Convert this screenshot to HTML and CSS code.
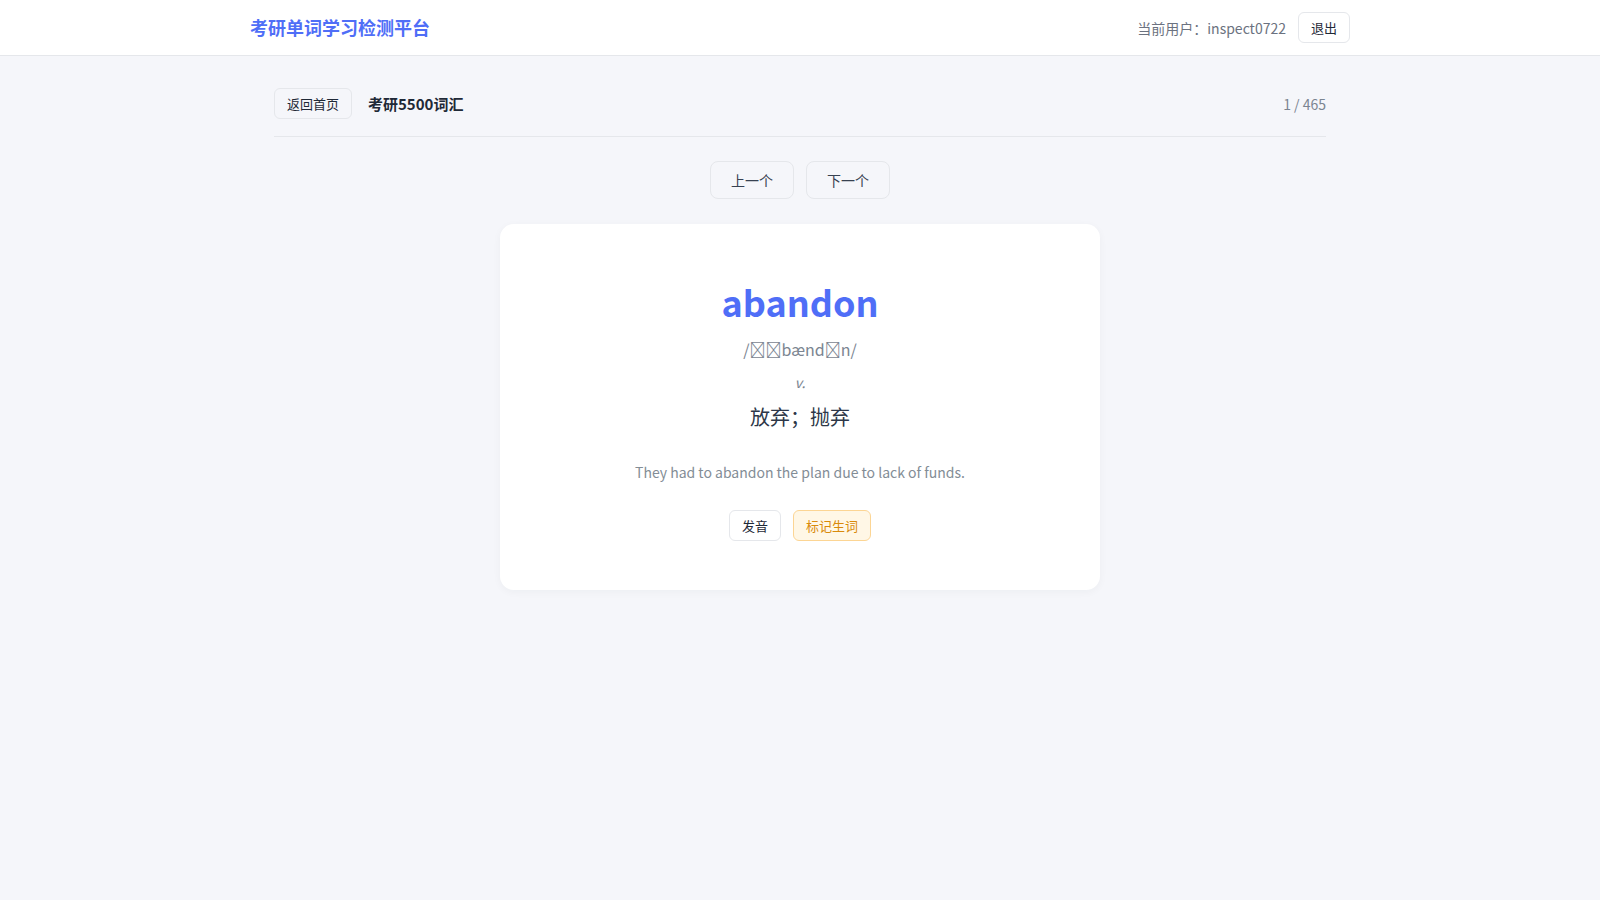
FILE: index.html
```html
<!DOCTYPE html>
<html lang="zh-CN">
<head>
<meta charset="UTF-8">
<title>考研单词学习检测平台</title>
<link rel="stylesheet" href="styles.css">
</head>
<body>
  <header class="site-header">
    <div class="header-inner">
      <div class="brand">考研单词学习检测平台</div>
      <div class="user-area">
        <span class="user-label">当前用户：inspect0722</span>
        <button class="btn btn-small">退出</button>
      </div>
    </div>
  </header>

  <main class="study">
    <div class="study-bar">
      <div class="study-bar-left">
        <button class="btn btn-small btn-soft">返回首页</button>
        <span class="book-title">考研5500词汇</span>
      </div>
      <span class="progress">1 / 465</span>
    </div>

    <div class="word-nav">
      <button class="btn btn-nav">上一个</button>
      <button class="btn btn-nav">下一个</button>
    </div>

    <section class="word-card">
      <h1 class="word">abandon</h1>
      <div class="phonetic">/&#xE000;&#xE000;bænd&#xE000;n/</div>
      <div class="pos">v.</div>
      <div class="meaning">放弃；抛弃</div>
      <p class="example">They had to abandon the plan due to lack of funds.</p>
      <div class="card-actions">
        <button class="btn btn-small">发音</button>
        <button class="btn btn-small btn-mark">标记生词</button>
      </div>
    </section>
  </main>
</body>
</html>
```

FILE: styles.css
```css
* {
  box-sizing: border-box;
}

html, body {
  margin: 0;
  padding: 0;
}

body {
  background: #f5f6fa;
  font-family: "Noto Sans CJK SC", "Noto Sans", sans-serif;
  color: #1f2937;
  min-height: 900px;
}

button {
  font-family: inherit;
}

/* top header */
.site-header {
  background: #ffffff;
  border-bottom: 1px solid #e5e7eb;
}

.header-inner {
  max-width: 1100px;
  margin: 0 auto;
  height: 55px;
  display: flex;
  align-items: center;
  justify-content: space-between;
}

.brand {
  font-size: 18px;
  font-weight: 700;
  color: #4f6ef7;
  line-height: 24px;
  padding-bottom: 1px;
}

.user-area {
  display: flex;
  align-items: center;
  gap: 12px;
}

.user-label {
  font-size: 14px;
  color: #6b7280;
}

/* buttons */
.btn {
  border: 1px solid #e5e7eb;
  background: #ffffff;
  color: #1f2937;
  cursor: pointer;
}

.btn-small {
  font-size: 13px;
  line-height: 19px;
  padding: 5px 12px;
  border-radius: 6px;
}

.btn-soft {
  background: #f5f6fa;
}

.btn-nav {
  font-size: 14px;
  line-height: 20px;
  padding: 8px 20px;
  border-radius: 8px;
  background: #f5f6fa;
  color: #374151;
}

.btn-mark {
  background: #fff7e6;
  border-color: #fcd594;
  color: #d98a0b;
}

/* study area */
.study {
  max-width: 1100px;
  margin: 0 auto;
  padding: 0 24px;
}

.study-bar {
  display: flex;
  align-items: center;
  justify-content: space-between;
  padding: 32px 0 17px;
  border-bottom: 1px solid #e5e7eb;
}

.study-bar-left {
  display: flex;
  align-items: center;
  gap: 16px;
}

.book-title {
  font-size: 15px;
  font-weight: 700;
  color: #1f2937;
}

.progress {
  font-size: 14px;
  color: #7b8591;
}

.word-nav {
  display: flex;
  justify-content: center;
  gap: 12px;
  margin: 24px 0 25px;
}

/* word card */
.word-card {
  width: 600px;
  margin: 0 auto;
  background: #ffffff;
  border-radius: 14px;
  padding: 48px 32px 49px;
  text-align: center;
  box-shadow: 0 2px 8px rgba(31, 41, 55, 0.04);
}

.word {
  margin: 0;
  font-size: 36px;
  line-height: 58px;
  font-weight: 700;
  color: #4f6ef7;
}

.phonetic {
  margin-top: 6px;
  font-size: 16px;
  line-height: 26px;
  color: #7b8591;
}

.pos {
  margin-top: 10px;
  font-size: 14px;
  line-height: 21px;
  font-style: italic;
  color: #7b8591;
}

.meaning {
  margin-top: 9px;
  font-size: 20px;
  line-height: 30px;
  color: #2d3748;
}

.example {
  margin: 29px 0 0;
  font-size: 14px;
  line-height: 22px;
  color: #838d96;
}

.card-actions {
  margin-top: 27px;
  display: flex;
  justify-content: center;
  gap: 12px;
}
```
